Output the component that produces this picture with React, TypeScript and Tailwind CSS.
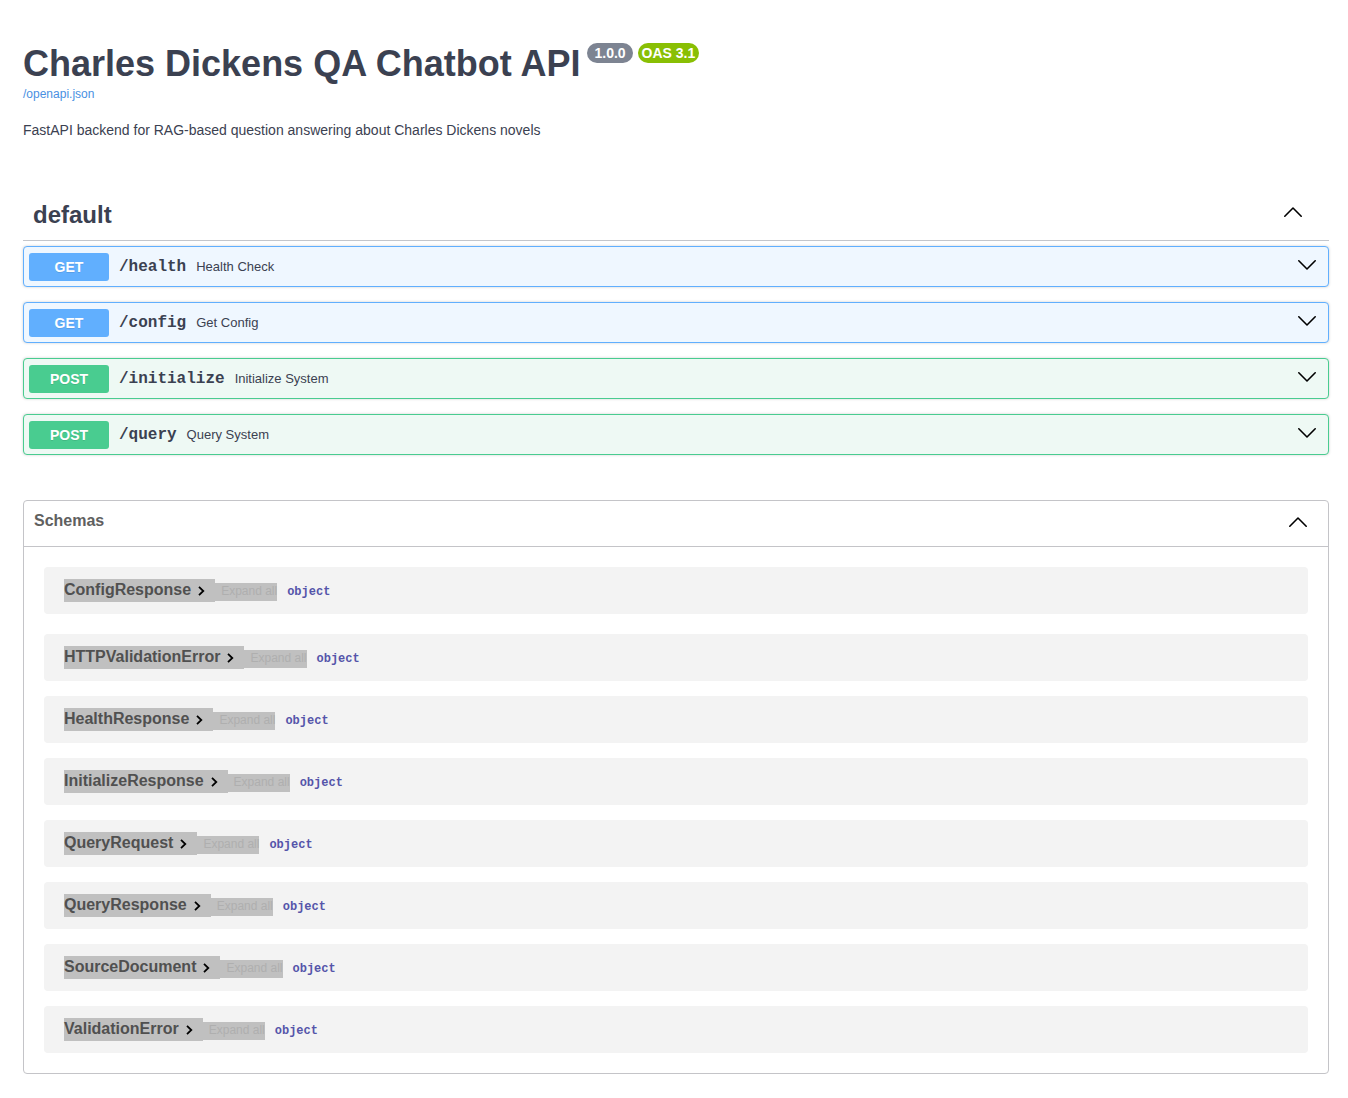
const SANS = "font-['Liberation_Sans',Arial,sans-serif]";
const MONO = "font-['Liberation_Mono','Courier_New',monospace]";

type Operation = { method: 'GET' | 'POST'; path: string; summary: string };

const operations: Operation[] = [
  { method: 'GET', path: '/health', summary: 'Health Check' },
  { method: 'GET', path: '/config', summary: 'Get Config' },
  { method: 'POST', path: '/initialize', summary: 'Initialize System' },
  { method: 'POST', path: '/query', summary: 'Query System' },
];

const schemas = [
  'ConfigResponse',
  'HTTPValidationError',
  'HealthResponse',
  'InitializeResponse',
  'QueryRequest',
  'QueryResponse',
  'SourceDocument',
  'ValidationError',
];

const methodStyles = {
  GET: { row: 'border-[#61affe] bg-[#eff7ff]', badge: 'bg-[#61affe]' },
  POST: { row: 'border-[#49cc90] bg-[#eef9f4]', badge: 'bg-[#49cc90]' },
};

function Arrow({ up = false }: { up?: boolean }) {
  return (
    <span className="shrink-0 pb-1">
      <svg
        viewBox="0 0 20 20"
        className={up ? 'size-5' : 'size-5 rotate-180'}
        fill="none"
        stroke="#000"
        strokeWidth="1.6"
        strokeLinecap="round"
        strokeLinejoin="round"
        aria-hidden="true"
      >
        <path d="M1.800 14.200 10 6l8.200 8.200" />
      </svg>
    </span>
  );
}

function OperationRow({ method, path, summary }: Operation) {
  const style = methodStyles[method];
  return (
    <button
      type="button"
      className={`flex w-full items-center rounded border pt-[6px] pr-[11px] pb-[5px] pl-[5px] text-left shadow-[0_0_3px_rgba(0,0,0,0.19)] ${style.row}`}
    >
      <span
        className={`w-20 rounded-[3px] text-center text-sm leading-7 font-bold text-white [text-shadow:0_1px_0_rgba(0,0,0,0.1)] ${style.badge}`}
      >
        {method}
      </span>
      <span className={`pl-[10px] text-base leading-7 font-bold ${MONO}`}>{path}</span>
      <span className="grow pl-[10px] text-[13px] leading-7">{summary}</span>
      <Arrow />
    </button>
  );
}

function SchemaRow({ name }: { name: string }) {
  return (
    <li className="flex h-[47px] items-start rounded bg-[#f3f3f3] px-5 pt-3 first:mb-[5px]">
      <button
        type="button"
        className="flex h-[23px] items-center bg-[#c0c0c0] pr-2 text-base leading-[22px] font-bold text-[#505050]"
      >
        <span className="pb-[2px]">{name}</span>
        <svg
          viewBox="0 0 12 12"
          className="ml-1 size-3"
          fill="none"
          stroke="#000"
          strokeWidth="1.8"
          aria-hidden="true"
        >
          <path d="M4 1.800 8.300 6 4 10.200" />
        </svg>
      </button>
      <button
        type="button"
        className="mt-1 h-[18px] bg-[#c0c0c0] pb-[2px] pl-[6px] text-xs leading-4 text-[#afafaf]"
      >
        Expand all
      </button>
      <span className={`mt-1 pl-[10px] text-xs leading-[18px] font-bold text-[#5555aa] ${MONO}`}>object</span>
    </li>
  );
}

export default function App() {
  return (
    <main className={`bg-white pt-10 pr-[19px] pb-6 pl-[23px] text-[#3b4151] ${SANS}`}>
      <header>
        <h1 className="flex items-start text-4xl leading-[48px] font-bold">
          Charles Dickens QA Chatbot API
          <span className="mt-[3px] ml-[7px] flex gap-[5px] text-sm leading-5 text-white">
            <span className="rounded-full bg-[#7d8492] px-[7px] text-center">1.0.0</span>
            <span className="rounded-full bg-[#89bf04] px-1">OAS 3.1</span>
          </span>
        </h1>
        <a href="/openapi.json" className="block w-fit text-xs leading-3 text-[#4990e2]">
          /openapi.json
        </a>
        <p className="mt-[22px] text-sm leading-4">
          FastAPI backend for RAG-based question answering about Charles Dickens novels
        </p>
      </header>

      <section className="mt-[49px]">
        <h2 className="border-b border-[#c4c6cb]">
          <button
            type="button"
            className="flex h-[53px] w-full items-center justify-between pr-[26px] pl-[10px] text-left text-2xl font-bold"
          >
            <span className="pt-[2px]">default</span>
            <Arrow up />
          </button>
        </h2>
        <div className="mt-[5px] flex flex-col gap-[15px]">
          {operations.map((op) => (
            <OperationRow key={op.path} {...op} />
          ))}
        </div>
      </section>

      <section className="mt-[45px] rounded border border-[#c4c4c8]">
        <h2 className="border-b border-[#c4c4c8]">
          <button
            type="button"
            className="flex h-[45px] w-full items-center justify-between pr-5 pl-[10px] text-left text-base font-bold text-[#606060]"
          >
            <span className="pb-[6px]">Schemas</span>
            <Arrow up />
          </button>
        </h2>
        <ul className="flex flex-col gap-[15px] p-5">
          {schemas.map((name) => (
            <SchemaRow key={name} name={name} />
          ))}
        </ul>
      </section>
    </main>
  );
}
